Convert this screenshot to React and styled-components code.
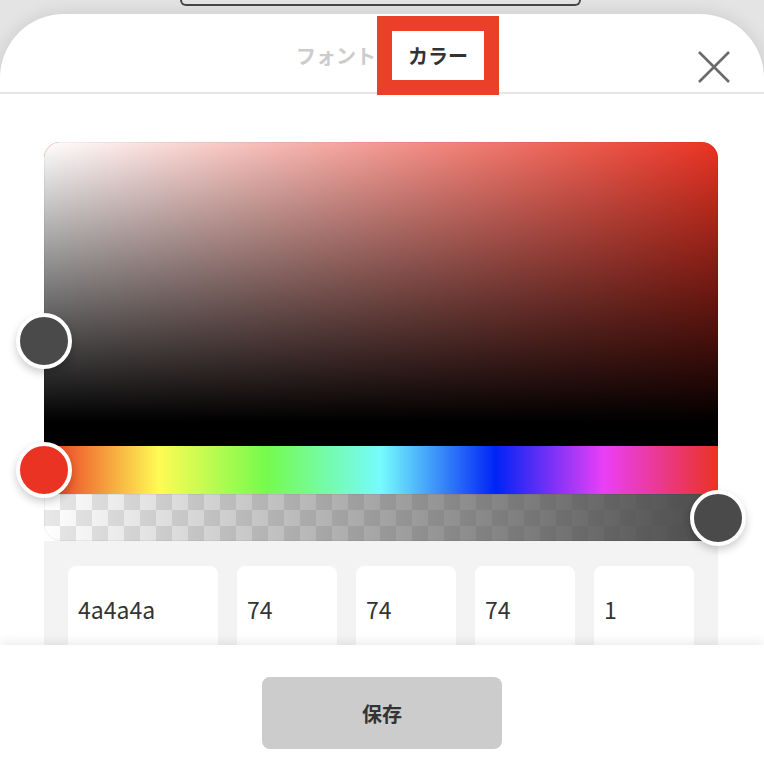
import React from "react";
import styled, { createGlobalStyle } from "styled-components";

const GlobalStyle = createGlobalStyle`
  html, body {
    margin: 0;
    padding: 0;
    height: 100%;
  }
  body {
    background: #e5e4e5;
    font-family: "Noto Sans CJK JP", "Noto Sans", sans-serif;
    overflow: hidden;
  }
  * {
    box-sizing: border-box;
  }
`;

const Page = styled.div`
  height: 770px;
  display: flex;
  flex-direction: column;
  overflow: hidden;
`;

const TopArea = styled.div`
  height: 14px;
  flex-shrink: 0;
`;

const TopPill = styled.div`
  margin-left: 180px;
  width: 401px;
  height: 6px;
  border: 2px solid #474747;
  border-top: none;
  border-radius: 0 0 9px 9px;
`;

const Sheet = styled.div`
  flex: 1;
  display: flex;
  flex-direction: column;
  background: #fff;
  border-radius: 64px 64px 0 0;
  box-shadow: 0 0 18px rgba(0, 0, 0, 0.12);
  overflow: hidden;
  position: relative;
`;

const Header = styled.div`
  position: relative;
  height: 80px;
  flex-shrink: 0;
  border-bottom: 2px solid #e6e6e6;
`;

const Tabs = styled.div`
  display: flex;
  justify-content: center;
  padding-top: 17px;
`;

const Tab = styled.div`
  height: 49px;
  padding: 0 16px;
  display: flex;
  align-items: center;
  font-size: 20px;
  font-weight: 700;
  color: ${(p) => (p.$active ? "#333" : "#cccccc")};
  outline: ${(p) => (p.$active ? "15px solid #ea4029" : "none")};
  position: relative;
  z-index: 1;
`;

const CloseButton = styled.button`
  position: absolute;
  right: 34px;
  top: 37px;
  width: 32px;
  height: 32px;
  padding: 0;
  border: none;
  background: none;
`;

const Body = styled.div`
  flex: 1;
  padding: 48px 46px 0 44px;
  overflow: hidden;
`;

const Picker = styled.div`
  width: 674px;
  display: flex;
  flex-direction: column;
`;

const Saturation = styled.div`
  position: relative;
  height: 304px;
  border-bottom: 24px solid #000;
  border-radius: 16px 16px 0 0;
  background: linear-gradient(to top, #000, rgba(0, 0, 0, 0)),
    linear-gradient(to right, #fff, rgba(255, 255, 255, 0)), #ea3323;
  box-shadow: inset 0 0 0 1px rgba(0, 0, 0, 0.05);
`;

const HueBar = styled.div`
  position: relative;
  height: 48px;
  background: linear-gradient(
    to right,
    #ea3323 0%,
    #fffb54 17%,
    #75fb4c 33%,
    #75fbfd 50%,
    #0023f5 67%,
    #ea3ff7 83%,
    #ea3323 100%
  );
`;

const AlphaBar = styled.div`
  position: relative;
  height: 47px;
  border-radius: 0 0 16px 16px;
  background: repeating-conic-gradient(#e8e8e8 0% 25%, #ffffff 0% 50%) 0 0 / 32px 32px;
`;

const AlphaGradient = styled.div`
  position: absolute;
  inset: 0;
  border-radius: inherit;
  background: linear-gradient(to right, rgba(74, 74, 74, 0), #4a4a4a);
  box-shadow: inset 0 0 0 1px rgba(0, 0, 0, 0.05);
`;

const Thumb = styled.div`
  position: absolute;
  z-index: 2;
  width: 56px;
  height: 56px;
  border: 4px solid #fff;
  border-radius: 50%;
  transform: translate(-50%, -50%);
  box-shadow: 0 4px 8px rgba(0, 0, 0, 0.2);
  background: ${(p) => p.$color};
  left: ${(p) => p.$x};
  top: ${(p) => p.$y};
`;

const Fields = styled.div`
  display: flex;
  gap: 19px;
  padding: 25px 24px 24px;
  background: #f3f3f3;
`;

const Field = styled.input`
  width: ${(p) => (p.$wide ? "150px" : "100px")};
  height: 86px;
  border: none;
  border-radius: 8px;
  background: #fff;
  padding: 0 10px;
  font-family: "Noto Sans CJK JP", "Noto Sans", sans-serif;
  font-size: 23px;
  color: #333;
  outline: none;
`;

const Footer = styled.div`
  position: relative;
  z-index: 3;
  height: 125px;
  flex-shrink: 0;
  display: flex;
  justify-content: center;
  padding-top: 32px;
  background: #fff;
  box-shadow: 0 -4px 10px rgba(0, 0, 0, 0.07);
`;

const SaveButton = styled.button`
  width: 240px;
  height: 72px;
  border: none;
  border-radius: 8px;
  background: #cccccc;
  color: #333;
  font-family: "Noto Sans CJK JP", "Noto Sans", sans-serif;
  font-size: 20px;
  font-weight: 700;
`;

const CloseIcon = () => (
  <svg width="32" height="32" viewBox="0 0 32 32">
    <path d="M1 1L31 31M31 1L1 31" stroke="#6b6b6b" strokeWidth="2.6" fill="none" />
  </svg>
);

const fields = [
  { value: "4a4a4a", wide: true },
  { value: "74" },
  { value: "74" },
  { value: "74" },
  { value: "1" },
];

export default function App() {
  return (
    <Page>
      <GlobalStyle />
      <TopArea>
        <TopPill />
      </TopArea>
      <Sheet>
        <Header>
          <Tabs>
            <Tab>フォント</Tab>
            <Tab $active>カラー</Tab>
          </Tabs>
          <CloseButton aria-label="close">
            <CloseIcon />
          </CloseButton>
        </Header>
        <Body>
          <Picker>
            <Saturation>
              <Thumb $color="#4a4a4a" $x="0%" $y="199px" />
            </Saturation>
            <HueBar>
              <Thumb $color="#ea3323" $x="0%" $y="50%" />
            </HueBar>
            <AlphaBar>
              <AlphaGradient />
              <Thumb $color="#4a4a4a" $x="100%" $y="50%" />
            </AlphaBar>
            <Fields>
              {fields.map((f, i) => (
                <Field key={i} $wide={f.wide} defaultValue={f.value} readOnly />
              ))}
            </Fields>
          </Picker>
        </Body>
        <Footer>
          <SaveButton>保存</SaveButton>
        </Footer>
      </Sheet>
    </Page>
  );
}
